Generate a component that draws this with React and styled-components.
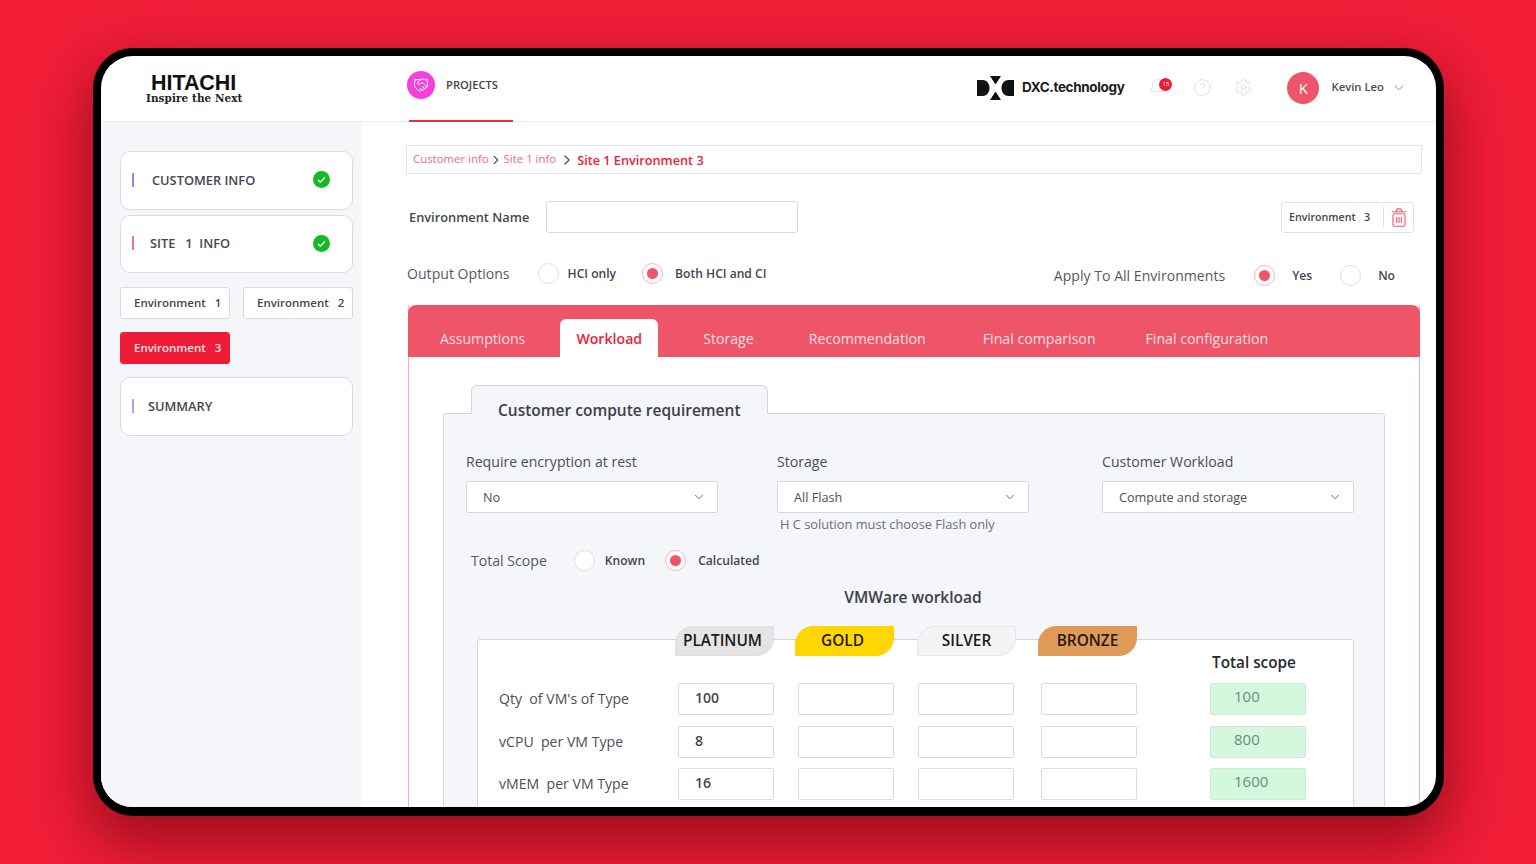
import React from 'react';
import styled, { createGlobalStyle } from 'styled-components';
import { Bell, ChevronDown, CircleHelp, Handshake, Settings } from 'lucide-react';

const GlobalStyle = createGlobalStyle`
  html, body {
    margin: 0;
    height: 100%;
    overflow: hidden;
    background: #f21e38;
    font-family: "Open Sans", "Liberation Sans", sans-serif;
    color: #3c4048;
  }
  * { box-sizing: border-box; }
`;

const Stage = styled.div`
  height: 864px;
  padding: 48px 92px 0 93px;
`;

const Device = styled.div`
  width: 1351px;
  height: 768px;
  border: 8px solid #000;
  border-bottom-width: 9px;
  border-radius: 40px;
  background: #fff;
  overflow: hidden;
  box-shadow: 0 24px 60px 6px rgba(90, 0, 10, 0.55);
  display: flex;
  flex-direction: column;
`;

const Header = styled.header`
  height: 66px;
  flex: none;
  display: flex;
  align-items: flex-start;
  border-bottom: 1px solid #ececee;
`;

const LogoBlock = styled.div`
  width: 310px;
  padding: 18px 0 0 45px;
`;

const LogoMain = styled.div`
  font-family: "Liberation Sans", Arial, sans-serif;
  font-weight: 700;
  font-size: 21.5px;
  line-height: 18px;
  letter-spacing: -0.05px;
  color: #111;
  padding-left: 5px;
`;

const LogoSub = styled.div`
  font-family: "DejaVu Serif", serif;
  font-weight: 700;
  font-size: 10.4px;
  line-height: 12px;
  letter-spacing: 0.1px;
  color: #222;
`;

const ProjectsNav = styled.div`
  width: 104px;
  height: 66px;
  margin-left: -2px;
  display: flex;
  align-items: flex-start;
  gap: 11px;
  padding-top: 15px;
  border-bottom: 2px solid #ee2a40;
`;

const ProjectsBadge = styled.span`
  width: 28px;
  height: 28px;
  margin-left: -2px;
  border-radius: 50%;
  background: #f63fdd;
  color: #fff;
  display: flex;
  align-items: center;
  justify-content: center;
`;

const ProjectsLabel = styled.span`
  font-size: 11.2px;
  font-weight: 600;
  line-height: 28px;
  color: #3f434a;
  white-space: nowrap;
`;

const HeaderRight = styled.div`
  margin-left: auto;
  height: 63px;
  display: flex;
  align-items: center;
  padding-right: 30px;
`;

const DxcWord = styled.span`
  font-family: Inter, "Liberation Sans", sans-serif;
  font-weight: 700;
  font-size: 13.5px;
  letter-spacing: -0.35px;
  color: #1c1c1c;
  margin: 0 0 2px 8px;
`;

const IconGroup = styled.div`
  display: flex;
  align-items: center;
  gap: 22px;
  margin-left: 24px;
  color: #dcdcdc;
`;

const BellWrap = styled.span`
  position: relative;
  display: flex;
  margin-right: 4px;
`;

const BellCount = styled.span`
  position: absolute;
  top: 0;
  right: -5px;
  width: 13px;
  height: 13px;
  border-radius: 50%;
  background: #ec1c33;
  color: #fff;
  font-size: 6px;
  line-height: 13px;
  text-align: center;
`;

const Avatar = styled.span`
  width: 32px;
  height: 32px;
  margin-left: 34px;
  border-radius: 50%;
  background: #ee5568;
  color: #fff;
  font-size: 15px;
  line-height: 32px;
  text-align: center;
`;

const UserName = styled.span`
  margin: 0 8px 2px 12px;
  font-size: 11.3px;
  font-weight: 600;
  color: #4a4e55;
`;

const Body = styled.div`
  flex: 1;
  min-height: 0;
  display: flex;
`;

const Sidebar = styled.aside`
  width: 260px;
  flex: none;
  background: #f4f6f9;
  padding: 29px 8px 0 19px;
  display: flex;
  flex-direction: column;
`;

const NavCard = styled.div`
  height: ${p => p.$h}px;
  margin-top: ${p => p.$top || 0}px;
  padding: 0 22px 2px 11px;
  display: flex;
  align-items: center;
  background: #fff;
  border: 1px solid #d9dbdf;
  border-radius: 10px;
`;

const NavBar = styled.span`
  width: 2px;
  height: 14px;
  background: ${p => p.$color};
`;

const NavText = styled.span`
  margin-left: ${p => p.$ml}px;
  flex: 1;
  font-size: 12.8px;
  font-weight: 600;
  white-space: pre;
  color: #43474e;
`;

const EnvGrid = styled.div`
  margin-top: 14px;
  display: grid;
  grid-template-columns: 110px 110px;
  justify-content: space-between;
  row-gap: 13px;
`;

const EnvButton = styled.div`
  height: 32px;
  padding-left: 13px;
  font-size: 11.5px;
  font-weight: 600;
  line-height: 29px;
  white-space: pre;
  border-radius: 3px;
  border: 1px solid ${p => (p.$active ? '#ee1c37' : '#d9dbdf')};
  background: ${p => (p.$active ? '#ee1c37' : '#fff')};
  color: ${p => (p.$active ? '#fbe3e6' : '#43474e')};
`;

const Main = styled.main`
  flex: 1;
  min-width: 0;
  padding: 23px 14px 0 45px;
`;

const Breadcrumb = styled.div`
  height: 29px;
  padding-left: 6px;
  display: flex;
  align-items: center;
  border: 1px solid #e3e4e7;
`;

const Crumb = styled.span`
  font-size: 11.4px;
  color: #f0687a;
  white-space: nowrap;
  margin-bottom: 2px;
`;

const CrumbCurrent = styled.span`
  font-size: 12.7px;
  font-weight: 600;
  color: #ee2139;
  white-space: nowrap;
`;

const CrumbArrow = styled(ChevronDown)`
  transform: rotate(-90deg);
  color: #555;
  margin: 0 ${p => p.$space}px;
`;

const NameRow = styled.div`
  height: 32px;
  margin-top: 27px;
  padding: 0 8px 0 3px;
  display: flex;
  align-items: center;
`;

const FieldName = styled.span`
  width: 137px;
  font-size: 12.8px;
  font-weight: 600;
  color: #43474e;
`;

const NameInput = styled.div`
  width: 252px;
  height: 32px;
  background: #fff;
  border: 1px solid #d7d9dd;
  border-radius: 3px;
`;

const EnvTag = styled.div`
  margin-left: auto;
  width: 133px;
  height: 31px;
  padding: 0 6px 0 7px;
  display: flex;
  align-items: center;
  border: 1px solid #e0e2e5;
  border-radius: 3px;
  font-size: 10.7px;
  font-weight: 600;
  white-space: pre;
  color: #43474e;
`;

const TagDivider = styled.span`
  width: 1px;
  height: 20px;
  margin: 0 7px 0 auto;
  background: #dddfe2;
`;

const OptionsRow = styled.div`
  height: 32px;
  margin-top: 24px;
  padding: 0 27px 0 1px;
  display: flex;
  align-items: center;
`;

const ApplyGroup = styled.div`
  margin-left: auto;
  padding-top: 4px;
  display: flex;
  align-items: center;
`;

const OptionLabel = styled.span`
  font-size: 14.1px;
  color: #55595f;
  white-space: nowrap;
  margin-right: ${p => p.$mr}px;
`;

const RadioCircle = styled.span`
  width: 21px;
  height: 21px;
  flex: none;
  display: flex;
  align-items: center;
  justify-content: center;
  background: #fff;
  border-radius: 50%;
  border: 1px solid ${p => (p.$on ? '#f7b4bd' : '#dcdde0')};

  &::after {
    content: '';
    width: 11px;
    height: 11px;
    border-radius: 50%;
    background: ${p => (p.$on ? '#ee5568' : 'transparent')};
  }
`;

const RadioText = styled.span`
  margin: 0 ${p => p.$mr}px 0 ${p => p.$ml}px;
  font-size: 12.1px;
  font-weight: 600;
  white-space: nowrap;
  color: #43474e;
`;

const Panel = styled.section`
  margin: 16px 2px 0;
  padding-bottom: 40px;
  border: solid #f7b4bd;
  border-width: 0 1px;
`;

const TabBar = styled.nav`
  height: 52px;
  margin: 0 -1px;
  padding: 14px 0 0 16px;
  display: flex;
  background: #ee5568;
  border-radius: 8px 8px 0 0;
`;

const Tab = styled.div`
  height: 38px;
  margin-left: ${p => p.$ml}px;
  padding: 0 16px;
  font-size: 14.15px;
  line-height: 39px;
  white-space: nowrap;
  font-weight: ${p => (p.$active ? 600 : 400)};
  color: ${p => (p.$active ? '#ee2139' : '#fbdfe3')};
  background: ${p => (p.$active ? '#fff' : 'transparent')};
  border-radius: 6px 6px 0 0;
`;

const Requirement = styled.div`
  margin: 28px 34px 0 34px;
`;

const LegendTab = styled.div`
  position: relative;
  z-index: 1;
  width: 297px;
  height: 29px;
  margin: 0 0 -1px 28px;
  padding-left: 26px;
  font-size: 15.5px;
  font-weight: 600;
  line-height: 48px;
  color: #3c4048;
  background: #f4f6f9;
  border: 1px solid #d3d6db;
  border-bottom: 0;
  border-radius: 6px 6px 0 0;
`;

const RequirementBox = styled.div`
  height: 500px;
  padding: 38px 30px 0 22px;
  background: #f4f6f9;
  border: 1px solid #d3d6db;
  border-radius: 3px 3px 0 0;
`;

const SelectGrid = styled.div`
  display: grid;
  grid-template-columns: 311px 325px 252px;
`;

const FieldLabel = styled.div`
  font-size: 14.1px;
  line-height: 20px;
  margin-bottom: 9px;
  color: #4b4f56;
`;

const SelectBox = styled.div`
  width: 252px;
  height: 32px;
  padding: 0 11px 1px 16px;
  display: flex;
  align-items: center;
  justify-content: space-between;
  font-size: 12.7px;
  color: #4b4f56;
  background: #fff;
  border: 1px solid #d7d9dd;
  border-radius: 2px;
`;

const Hint = styled.div`
  margin: 2px 0 0 3px;
  font-size: 12.8px;
  line-height: 18px;
  color: #6c7076;
`;

const ScopeRow = styled.div`
  height: 24px;
  margin: 15px 0 0 5px;
  display: flex;
  align-items: center;
`;

const WorkloadTitle = styled.h3`
  margin: 14px 0 0;
  padding-left: 6px;
  font-size: 15.5px;
  font-weight: 600;
  line-height: 22px;
  text-align: center;
  color: #3c4048;
`;

const WorkloadTable = styled.div`
  height: 220px;
  margin: 31px 0 0 11px;
  padding: 0 0 0 21px;
  background: #fff;
  border: 1px solid #d3d6db;
  border-radius: 3px;
`;

const TableGrid = styled.div`
  display: grid;
  grid-template-columns: 179px 120px 120px 123px 169px 96px;
  row-gap: 10.5px;
  align-items: center;
`;

const TierRow = styled(TableGrid)`
  margin-top: -14px;
  height: 57px;
  align-items: start;
`;

const Tier = styled.div`
  width: 99px;
  height: 30px;
  margin-left: ${p => p.$ml}px;
  padding-right: ${p => p.$pr}px;
  font-size: 15.4px;
  font-weight: 600;
  line-height: 28px;
  text-align: center;
  color: #1d1a18;
  background: ${p => p.$bg};
  border: 1px solid ${p => p.$line};
  border-radius: 18px 0 18px 0;
`;

const TotalHead = styled.div`
  margin: 25px 0 0 2px;
  font-size: 15.3px;
  font-weight: 600;
  line-height: 22px;
  white-space: nowrap;
  color: #26282c;
`;

const RowLabel = styled.div`
  padding-bottom: 1px;
  font-size: 14.1px;
  white-space: pre;
  color: #4b4f56;
`;

const CellInput = styled.div`
  width: 96px;
  height: 32px;
  padding-left: ${p => (p.$total ? 23 : 16)}px;
  font-size: ${p => (p.$total ? 15 : 14)}px;
  font-weight: ${p => (p.$total ? 400 : 600)};
  line-height: ${p => (p.$total ? 25 : 28)}px;
  border-radius: 2px;
  border: 1px solid ${p => (p.$total ? '#cfe8d5' : '#d9dbdf')};
  background: ${p => (p.$total ? '#d3f8de' : '#fff')};
  color: ${p => (p.$total ? '#74887b' : '#43474e')};
`;

const CheckDot = () => (
  <svg width="17" height="17" viewBox="0 0 17 17">
    <circle cx="8.5" cy="8.5" r="8.5" fill="#10bd20" />
    <path d="M5 8.8l2.4 2.4L12 6.2" fill="none" stroke="#fff" strokeWidth="1.5" />
  </svg>
);

const DxcMark = () => (
  <svg width="37" height="26" viewBox="0 0 37 26">
    <path d="M0 5h5.500c4 0 7 3.500 7 8s-3 8-7 8H0z" fill="#111" />
    <path d="M37 5h-5.500c-4 0-7 3.500-7 8s3 8 7 8H37z" fill="#111" />
    <path d="M13 1h11l-5.500 8.500zM13 25h11l-5.500-8.500z" fill="#111" />
  </svg>
);

const TrashIcon = () => (
  <svg width="16" height="19" viewBox="0 0 16 19" fill="none" stroke="#ee5568" strokeWidth="1.100">
    <path d="M0.800 3.800h14.400M5.500 3.800V2.200c0-.8.500-1.300 1.300-1.300h2.400c.8 0 1.300.5 1.300 1.300v1.600" />
    <rect x="2" y="5.800" width="12" height="12.400" rx="1.500" />
    <path d="M5.700 9v6M8 9v6M10.300 9v6" />
  </svg>
);

const tabs = [
  { name: 'Assumptions', ml: 0 },
  { name: 'Workload', ml: 19, active: true },
  { name: 'Storage', ml: 29 },
  { name: 'Recommendation', ml: 23 },
  { name: 'Final comparison', ml: 25 },
  { name: 'Final configuration', ml: 18 },
];

const tiers = [
  { name: 'PLATINUM', bg: '#e4e4e4', line: '#dcdcdc', ml: -3, pr: 4 },
  { name: 'GOLD', bg: '#ffd600', line: '#ffd600', ml: -3, pr: 4 },
  { name: 'SILVER', bg: '#f4f4f4', line: '#e6e6e6', ml: -1, pr: 0 },
  { name: 'BRONZE', bg: '#e09a58', line: '#e09a58', ml: -3, pr: 0 },
];

const rows = [
  { label: "Qty  of VM's of Type", value: '100', total: '100' },
  { label: 'vCPU  per VM Type', value: '8', total: '800' },
  { label: 'vMEM  per VM Type', value: '16', total: '1600' },
];

export default function App() {
  return (
    <>
      <GlobalStyle />
      <Stage>
        <Device>
          <Header>
            <LogoBlock>
              <LogoMain>HITACHI</LogoMain>
              <LogoSub>Inspire the Next</LogoSub>
            </LogoBlock>
            <ProjectsNav>
              <ProjectsBadge><Handshake size={16} strokeWidth={1.5} /></ProjectsBadge>
              <ProjectsLabel>PROJECTS</ProjectsLabel>
            </ProjectsNav>
            <HeaderRight>
              <DxcMark />
              <DxcWord>DXC.technology</DxcWord>
              <IconGroup>
                <BellWrap>
                  <Bell size={19} strokeWidth={1.2} />
                  <BellCount>15</BellCount>
                </BellWrap>
                <CircleHelp size={19} strokeWidth={1.2} />
                <Settings size={19} strokeWidth={1.2} />
              </IconGroup>
              <Avatar>K</Avatar>
              <UserName>Kevin Leo</UserName>
              <ChevronDown size={14} strokeWidth={1.3} color="#666" />
            </HeaderRight>
          </Header>
          <Body>
            <Sidebar>
              <NavCard $h={59}>
                <NavBar $color="#8b86f0" />
                <NavText $ml={18}>CUSTOMER INFO</NavText>
                <CheckDot />
              </NavCard>
              <NavCard $h={58} $top={5}>
                <NavBar $color="#ee7585" />
                <NavText $ml={16}>{'SITE   1  INFO'}</NavText>
                <CheckDot />
              </NavCard>
              <EnvGrid>
                <EnvButton>{'Environment   1'}</EnvButton>
                <EnvButton>{'Environment   2'}</EnvButton>
                <EnvButton $active>{'Environment   3'}</EnvButton>
              </EnvGrid>
              <NavCard $h={59} $top={13}>
                <NavBar $color="#a9a4ee" />
                <NavText $ml={14}>SUMMARY</NavText>
              </NavCard>
            </Sidebar>
            <Main>
              <Breadcrumb>
                <Crumb>Customer info</Crumb>
                <CrumbArrow size={14} $space={0.5} />
                <Crumb>Site 1 info</Crumb>
                <CrumbArrow size={16} $space={2.5} />
                <CrumbCurrent>Site 1 Environment 3</CrumbCurrent>
              </Breadcrumb>
              <NameRow>
                <FieldName>Environment Name</FieldName>
                <NameInput />
                <EnvTag>
                  {'Environment   3'}
                  <TagDivider />
                  <TrashIcon />
                </EnvTag>
              </NameRow>
              <OptionsRow>
                <OptionLabel $mr={28}>Output Options</OptionLabel>
                <RadioCircle />
                <RadioText $ml={9} $mr={26}>HCI only</RadioText>
                <RadioCircle $on />
                <RadioText $ml={12} $mr={0}>Both HCI and CI</RadioText>
                <ApplyGroup>
                  <OptionLabel $mr={29}>Apply To All Environments</OptionLabel>
                  <RadioCircle $on />
                  <RadioText $ml={17} $mr={28}>Yes</RadioText>
                  <RadioCircle />
                  <RadioText $ml={17} $mr={0}>No</RadioText>
                </ApplyGroup>
              </OptionsRow>
              <Panel>
                <TabBar>
                  {tabs.map(tab => (
                    <Tab key={tab.name} $ml={tab.ml} $active={tab.active}>{tab.name}</Tab>
                  ))}
                </TabBar>
                <Requirement>
                  <LegendTab>Customer compute requirement</LegendTab>
                  <RequirementBox>
                    <SelectGrid>
                      <div>
                        <FieldLabel>Require encryption at rest</FieldLabel>
                        <SelectBox>No<ChevronDown size={14} strokeWidth={1.4} /></SelectBox>
                      </div>
                      <div>
                        <FieldLabel>Storage</FieldLabel>
                        <SelectBox>All Flash<ChevronDown size={14} strokeWidth={1.4} /></SelectBox>
                        <Hint>H C solution must choose Flash only</Hint>
                      </div>
                      <div>
                        <FieldLabel>Customer Workload</FieldLabel>
                        <SelectBox>Compute and storage<ChevronDown size={14} strokeWidth={1.4} /></SelectBox>
                      </div>
                    </SelectGrid>
                    <ScopeRow>
                      <OptionLabel $mr={27}>Total Scope</OptionLabel>
                      <RadioCircle />
                      <RadioText $ml={10} $mr={20}>Known</RadioText>
                      <RadioCircle $on />
                      <RadioText $ml={12} $mr={0}>Calculated</RadioText>
                    </ScopeRow>
                    <WorkloadTitle>VMWare workload</WorkloadTitle>
                    <WorkloadTable>
                      <TierRow>
                        <span />
                        {tiers.map(tier => (
                          <Tier key={tier.name} $bg={tier.bg} $line={tier.line} $ml={tier.ml} $pr={tier.pr}>{tier.name}</Tier>
                        ))}
                        <TotalHead>Total scope</TotalHead>
                      </TierRow>
                      <TableGrid>
                        {rows.map(row => (
                          <React.Fragment key={row.label}>
                            <RowLabel>{row.label}</RowLabel>
                            <CellInput>{row.value}</CellInput>
                            <CellInput />
                            <CellInput />
                            <CellInput />
                            <CellInput $total>{row.total}</CellInput>
                          </React.Fragment>
                        ))}
                      </TableGrid>
                    </WorkloadTable>
                  </RequirementBox>
                </Requirement>
              </Panel>
            </Main>
          </Body>
        </Device>
      </Stage>
    </>
  );
}
